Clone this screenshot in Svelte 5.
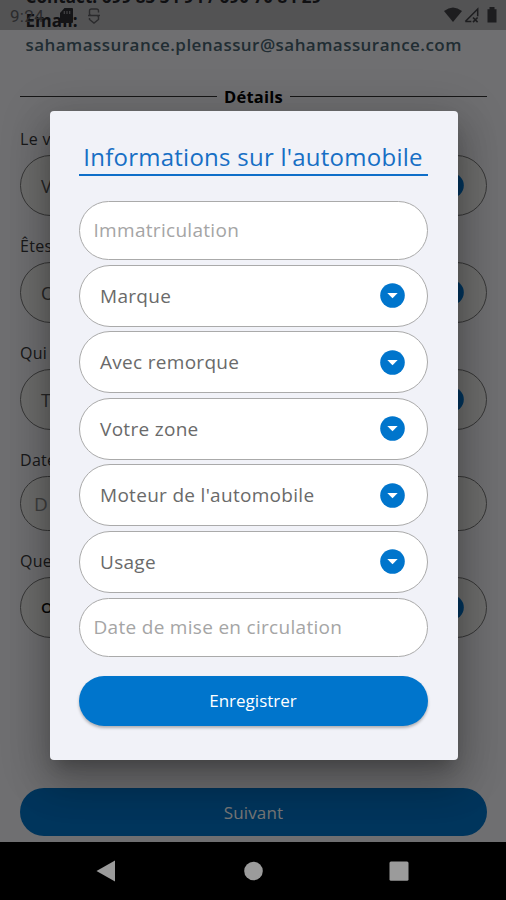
<script>
  const questions = [
    { label: 'Le v', value: 'V', select: true },
    { label: 'Êtes', value: 'O', select: true },
    { label: 'Qui', value: 'T', select: true },
    { label: 'Date', value: 'D', select: false },
    { label: 'Que', value: 'O', select: true, strong: true }
  ];
  const fields = [
    { text: 'Immatriculation', select: false },
    { text: 'Marque', select: true },
    { text: 'Avec remorque', select: true },
    { text: 'Votre zone', select: true },
    { text: "Moteur de l'automobile", select: true },
    { text: 'Usage', select: true },
    { text: 'Date de mise en circulation', select: false }
  ];
</script>

{#snippet caret()}
  <svg class="caret" width="25" height="25" viewBox="0 0 25 25">
    <circle cx="12.5" cy="12.5" r="12.3" fill="#0075cc" />
    <path d="M7.3 10h10.4l-5.2 5.3z" fill="#fff" />
  </svg>
{/snippet}

<div class="screen">
  <main class="page">
    <header>
      <p>Contact: 699 83 34 94 / 690 70 84 29</p>
      <p>Email:</p>
      <p class="mail">sahamassurance.plenassur@sahamassurance.com</p>
    </header>
    <div class="divider"><i></i><b>Détails</b><i></i></div>
    <div class="form">
      {#each questions as q}
        <label class="label" for={q.label}>{q.label}</label>
        <div class="box" class:plain={!q.select} class:strong={q.strong} id={q.label}>
          <span>{q.value}</span>
          {#if q.select}{@render caret()}{/if}
        </div>
      {/each}
    </div>
    <button class="next">Suivant</button>
  </main>

  <div class="scrim">
    <section class="dialog">
      <h1><span>Informations sur l'automobile</span></h1>
      <div class="fields">
        {#each fields as f}
          <div class="field" class:plain={!f.select}>
            <span>{f.text}</span>
            {#if f.select}{@render caret()}{/if}
          </div>
        {/each}
      </div>
      <button class="save">Enregistrer</button>
    </section>
  </div>

  <div class="status">
    <span class="time">9:24</span>
    <svg class="sd" width="13" height="15" viewBox="0 0 13 15"><path d="M4.5 0H12q1 0 1 1v13q0 1-1 1H1q-1 0-1-1V5z" fill="#151517" /><path d="M4.3 3v3M7 3v3M9.7 3v3" stroke="#434345" stroke-width="1.2" /></svg>
    <svg class="sync" width="12" height="16" viewBox="0 0 12 16" fill="none" stroke="#2b2b2d" stroke-width="1.4"><path d="M10.500 4.500V3Q10.500 1 8.500 1H3.500Q1.500 1 1.500 3V5.500Q1.500 7.500 3.500 7.500H8.500Q10.500 7.500 10.500 9.500V11.500L6 15 1.500 11.500V10M0 7.500h12" /></svg>
    <svg class="signals" width="54" height="17" viewBox="0 0 54 17">
      <path d="M0 4Q9 -3 18 4L9 15z" fill="#1d1d1f" />
      <path d="M21.3 14.5L33.7 2v7.2M21.3 14.5h6" fill="none" stroke="#1d1d1f" stroke-width="1.5" />
      <path d="M29 10.5l4.6 4.6m0-4.6L29 15.1" stroke="#1d1d1f" stroke-width="1.6" />
      <path d="M43.500 2.300h2V0h5v2.300h2V15.500h-9z" fill="#1d1d1f" />
    </svg>
  </div>

  <nav>
    <svg width="506" height="58" viewBox="0 0 506 58" fill="#9b9b9b">
      <path d="M96.500 29L115 18.500v21z" />
      <circle cx="253.500" cy="29" r="9.300" />
      <rect x="389.500" y="19.500" width="19" height="19.300" rx="1.500" />
    </svg>
  </nav>
</div>

<style>
  :global(body) { background: #000; }
  .screen {
    position: relative;
    display: flex;
    flex-direction: column;
    width: 506px;
    height: 900px;
    overflow: hidden;
    font-family: "Open Sans", "Noto Sans", sans-serif;
  }
  p, h1 { margin: 0; font-weight: 400; }
  button { border: 0; padding: 0; font-family: inherit; color: #fff; background: #0075cc; display: block; }
  .page { height: 842px; background: #f2f2f6; overflow: hidden; box-sizing: border-box; padding: 0 19px 0 20px; display: flex; flex-direction: column; }
  header { margin: -15px 0 0 5.500px; height: 73px; flex: none; font-size: 17px; line-height: 23.800px; color: #303036; white-space: nowrap; }
  header p { font-weight: 700; letter-spacing: .08px; }
  header .mail { color: #48626f; font-weight: 600; letter-spacing: .45px; }
  .divider { display: flex; align-items: center; gap: 7px; height: 24px; margin-top: 26.500px; flex: none; font-size: 16.500px; line-height: 24px; color: #000; letter-spacing: .25px; }
  .divider i { flex: 1; height: 1.300px; background: #333; }
  .form { margin-top: 14.500px; height: 665px; display: flex; flex-direction: column; }
  .label { height: 32px; line-height: 32px; font-size: 16px; letter-spacing: .3px; color: #38383a; flex: none; }
  .box { height: 61px; margin-bottom: 14px; box-sizing: border-box; border: 1px solid #777; border-radius: 31px; background: #eeeeec; padding: 0 22px 0 20px; display: flex; align-items: center; justify-content: space-between; font-size: 18px; color: #555; flex: none; }
  .box.plain { height: 55px; padding-left: 13px; font-size: 19px; color: #888; }
  .box.strong { color: #111; font-size: 15px; font-weight: 600; }
  .box.strong span { padding-bottom: 2px; }
  .next { height: 48px; flex: none; border-radius: 24px; font-size: 17px; letter-spacing: .15px; background: #0073c8; }
  .scrim { position: absolute; inset: 0 0 58px; background: rgba(0, 0, 0, .54); display: flex; justify-content: center; align-items: flex-start; padding-top: 111px; box-sizing: border-box; }
  .dialog { width: 408px; height: 649px; box-sizing: border-box; padding: 29px 30px 0 29px; margin-left: 1px; background: #f1f2f8; border-radius: 4px; box-shadow: 0 11px 15px -7px rgba(0,0,0,.2), 0 24px 38px 3px rgba(0,0,0,.18), 0 9px 46px 8px rgba(0,0,0,.16); }
  h1 { height: 36px; box-sizing: border-box; border-bottom: 2px solid #0f6fc9; color: #176fc5; font-size: 24px; line-height: 34px; letter-spacing: .25px; text-align: center; white-space: nowrap; }
  .fields { display: flex; flex-direction: column; gap: 4.700px; margin-top: 25px; }
  .field { height: 61.900px; box-sizing: border-box; border: 1px solid #aaa; border-radius: 31px; background: #fff; display: flex; align-items: center; justify-content: space-between; padding: 0 22px 0 20.500px; font-size: 19px; letter-spacing: .3px; color: #6a6a6a; white-space: nowrap; }
  .field.plain { height: 59px; padding-left: 14px; color: #a5a5a5; }
  .field.plain span { padding-bottom: 1px; }
  .caret { flex: none; }
  .save { width: 100%; height: 50px; margin-top: 19px; border-radius: 25px; font-size: 17px; font-weight: 500; box-shadow: 0 2px 3px rgba(0,0,0,.28); }
  .status { position: absolute; top: 0; left: 0; width: 506px; height: 30px; box-sizing: border-box; background: rgba(0,0,0,.25); display: flex; align-items: center; padding: 1px 9px 0 10px; color: #2b2b2d; }
  .time { width: 50px; font-family: Roboto, sans-serif; font-size: 17px; letter-spacing: .3px; }
  .sync { margin-left: 15px; }
  .signals { margin-left: auto; margin-right: -1px; }
  nav { height: 58px; background: #000; display: flex; }
</style>
